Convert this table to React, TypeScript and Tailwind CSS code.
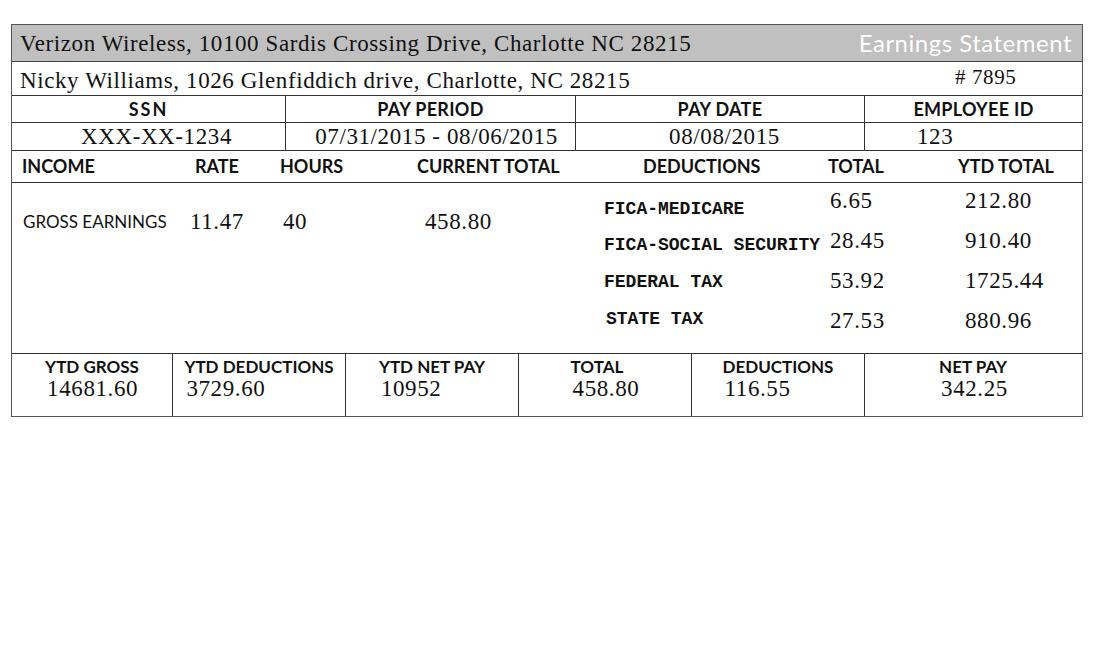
const serif = 'font-["Liberation_Serif",serif] tracking-[0.6px]'
const sans = 'font-[Lato,"Open_Sans",sans-serif]'

const deductions = [
  { label: 'FICA-MEDICARE', total: '6.65', ytd: '212.80', shift: 'pt-[16px]' },
  { label: 'FICA-SOCIAL SECURITY', total: '28.45', ytd: '910.40', shift: 'pt-[8px]' },
  { label: 'FEDERAL TAX', total: '53.92', ytd: '1725.44', shift: 'pt-[2px]' },
  { label: 'STATE TAX', total: '27.53', ytd: '880.96', shift: 'pb-[4px] pl-[2px]' },
]

const footer = [
  { label: 'YTD GROSS', value: '14681.60', w: 'w-[161px]' },
  { label: 'YTD DEDUCTIONS', value: '3729.60', w: 'w-[173px]' },
  { label: 'YTD NET PAY', value: '10952', w: 'w-[173px]' },
  { label: 'TOTAL', value: '458.80', w: 'w-[173px]' },
  { label: 'DEDUCTIONS', value: '116.55', w: 'w-[173px]' },
  { label: 'NET PAY', value: '342.25', w: 'flex-1' },
]

export default function App() {
  return (
    <div className="min-h-[645px] w-[1098px] bg-white pt-[24px] pl-[11px] text-[#111]">
      <div className="w-[1072px] border border-[#555]">
        {/* company line */}
        <div className="flex h-[37px] items-center justify-between border-b border-[#444] bg-[#c0c0c0] pl-[8px] pr-[10px]">
          <span className={`${serif} pt-[3px] text-[23px]`}>
            Verizon Wireless, 10100 Sardis Crossing Drive, Charlotte NC 28215
          </span>
          <span className={`${sans} text-[24px] tracking-[0.5px] text-white`}>Earnings Statement</span>
        </div>

        {/* employee line */}
        <div className="flex h-[34px] border-b border-[#333]">
          <span className={`${serif} flex-1 pl-[8px] pt-[2px] text-[23px]`}>
            Nicky Williams, 1026 Glenfiddich drive, Charlotte, NC 28215
          </span>
          <span className={`${serif} w-[127px] text-[21px]`}># 7895</span>
        </div>

        {/* id headers */}
        <div className={`${sans} grid h-[27px] grid-cols-[274px_290px_289px_1fr] border-b border-[#333] text-[18px] font-bold leading-none tracking-[0.3px]`}>
          <div className="flex items-center justify-center border-r border-[#333] tracking-[2px]">SSN</div>
          <div className="flex items-center justify-center border-r border-[#333]">PAY PERIOD</div>
          <div className="flex items-center justify-center border-r border-[#333]">PAY DATE</div>
          <div className="flex items-center justify-center">EMPLOYEE ID</div>
        </div>
        <div className={`${serif} grid h-[28px] grid-cols-[274px_290px_289px_1fr] border-b border-[#333] text-[23px] leading-none`}>
          <div className="flex items-center justify-center border-r border-[#333] pl-[16px]">XXX-XX-1234</div>
          <div className="flex items-center justify-center border-r border-[#333] pl-[12px]">07/31/2015 - 08/06/2015</div>
          <div className="flex items-center justify-center border-r border-[#333] pl-[9px]">08/08/2015</div>
          <div className="flex items-center pl-[52px]">123</div>
        </div>

        {/* column headers */}
        <div className={`${sans} grid h-[32px] grid-cols-[173px_85px_137px_226px_185px_130px_1fr] items-center border-b border-[#333] pl-[10px] text-[18px] font-bold`}>
          <span>INCOME</span>
          <span>RATE</span>
          <span>HOURS</span>
          <span>CURRENT TOTAL</span>
          <span>DEDUCTIONS</span>
          <span>TOTAL</span>
          <span>YTD TOTAL</span>
        </div>

        {/* body */}
        <div className="flex h-[171px] border-b border-[#333]">
          <div className="flex w-[592px] items-start pt-[22px]">
            <span className={`${sans} w-[178px] pl-[11px] pt-[4px] text-[17px]`}>GROSS EARNINGS</span>
            <span className={`${serif} w-[93px] text-[23px]`}>11.47</span>
            <span className={`${serif} w-[142px] text-[23px]`}>40</span>
            <span className={`${serif} text-[23px]`}>458.80</span>
          </div>
          <div className="mt-[-2px] flex flex-1 flex-col">
            {deductions.map((d) => (
              <div key={d.label} className="flex h-[40px] items-center">
                <span className={`w-[226px] font-["Liberation_Mono",monospace] text-[18px] font-bold ${d.shift}`}>
                  {d.label}
                </span>
                <span className={`${serif} w-[135px] text-[23px]`}>{d.total}</span>
                <span className={`${serif} text-[23px]`}>{d.ytd}</span>
              </div>
            ))}
          </div>
        </div>

        {/* totals */}
        <div className="flex h-[62px]">
          {footer.map((f, i) => (
            <div
              key={f.label}
              className={`${f.w} flex justify-center pt-[3px] ${i < footer.length - 1 ? 'border-r border-[#333]' : ''}`}
            >
              <div className="flex flex-col items-start">
                <span className={`${sans} text-[17px] font-bold leading-[20px]`}>{f.label}</span>
                <span className={`${serif} pl-[2px] text-[23px] leading-[24px]`}>{f.value}</span>
              </div>
            </div>
          ))}
        </div>
      </div>
    </div>
  )
}
